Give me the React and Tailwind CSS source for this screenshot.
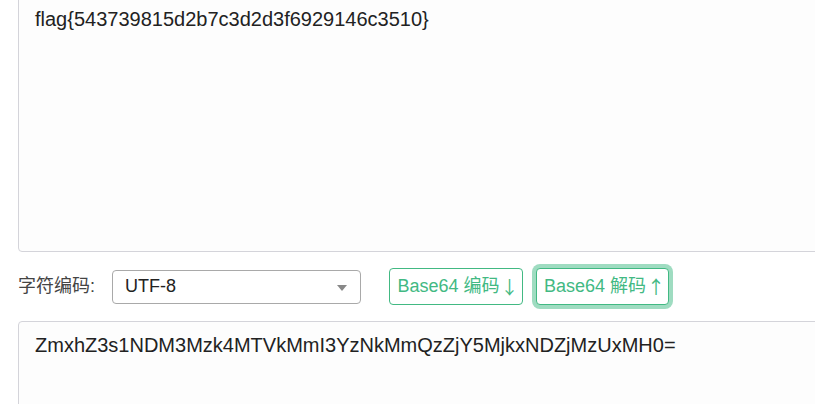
import React, { useState } from 'react';

const font = { fontFamily: '"Liberation Sans", Arial, "Noto Sans CJK SC", sans-serif' };
const arrowFont = { fontFamily: '"Noto Sans CJK SC", sans-serif' };

const App = () => {
  const [plain] = useState('flag{543739815d2b7c3d2d3f6929146c3510}');
  const [encoded] = useState('ZmxhZ3s1NDM3Mzk4MTVkMmI3YzNkMmQzZjY5MjkxNDZjMzUxMH0=');

  return (
    <div className="h-[404px] w-[815px] overflow-hidden bg-white" style={font}>
      <div className="-mt-[5px] pl-[18px]">
        {/* texto plano */}
        <textarea
          readOnly
          value={plain}
          className="block h-[257px] w-[840px] resize-none rounded border border-[#d4d4da] bg-[#fdfdfd] px-4 py-2 text-[20px] leading-[30px] text-[#222] outline-none"
        />

        {/* barra de controles */}
        <div className="mt-4 flex h-[37px] items-center">
          <span className="w-[94px] text-[18px] text-[#444]">字符编码:</span>
          <div className="relative flex h-[34px] w-[249px] items-center rounded border border-[#a9a9a9] bg-white pl-3 text-[18px] text-[#222]">
            UTF-8
            <span className="absolute right-[13px] top-[14px] h-0 w-0 border-x-[5px] border-t-[6px] border-x-transparent border-t-[#888]" />
          </div>
          <button className="ml-[28px] flex h-[37px] w-[134px] items-center justify-center rounded border border-[#42b983] bg-white text-[18px] text-[#42b983]">
            Base64 编码
            <span className="ml-[5px] inline-flex w-[10px] justify-center text-[18px]" style={arrowFont}>↓</span>
          </button>
          <button className="ml-[13px] flex h-[37px] w-[133px] items-center justify-center rounded border border-[#42b983] bg-white text-[18px] text-[#42b983] ring-4 ring-[#9fdcc1]">
            Base64 解码
            <span className="ml-[5px] inline-flex w-[10px] justify-center text-[18px]" style={arrowFont}>↑</span>
          </button>
        </div>

        {/* base64 */}
        <textarea
          readOnly
          value={encoded}
          className="mt-4 block h-[200px] w-[840px] resize-none rounded border border-[#d4d4da] bg-[#fdfdfd] px-4 py-2 text-[20px] leading-[30px] text-[#222] outline-none"
        />
      </div>
    </div>
  );
};

export default App;
